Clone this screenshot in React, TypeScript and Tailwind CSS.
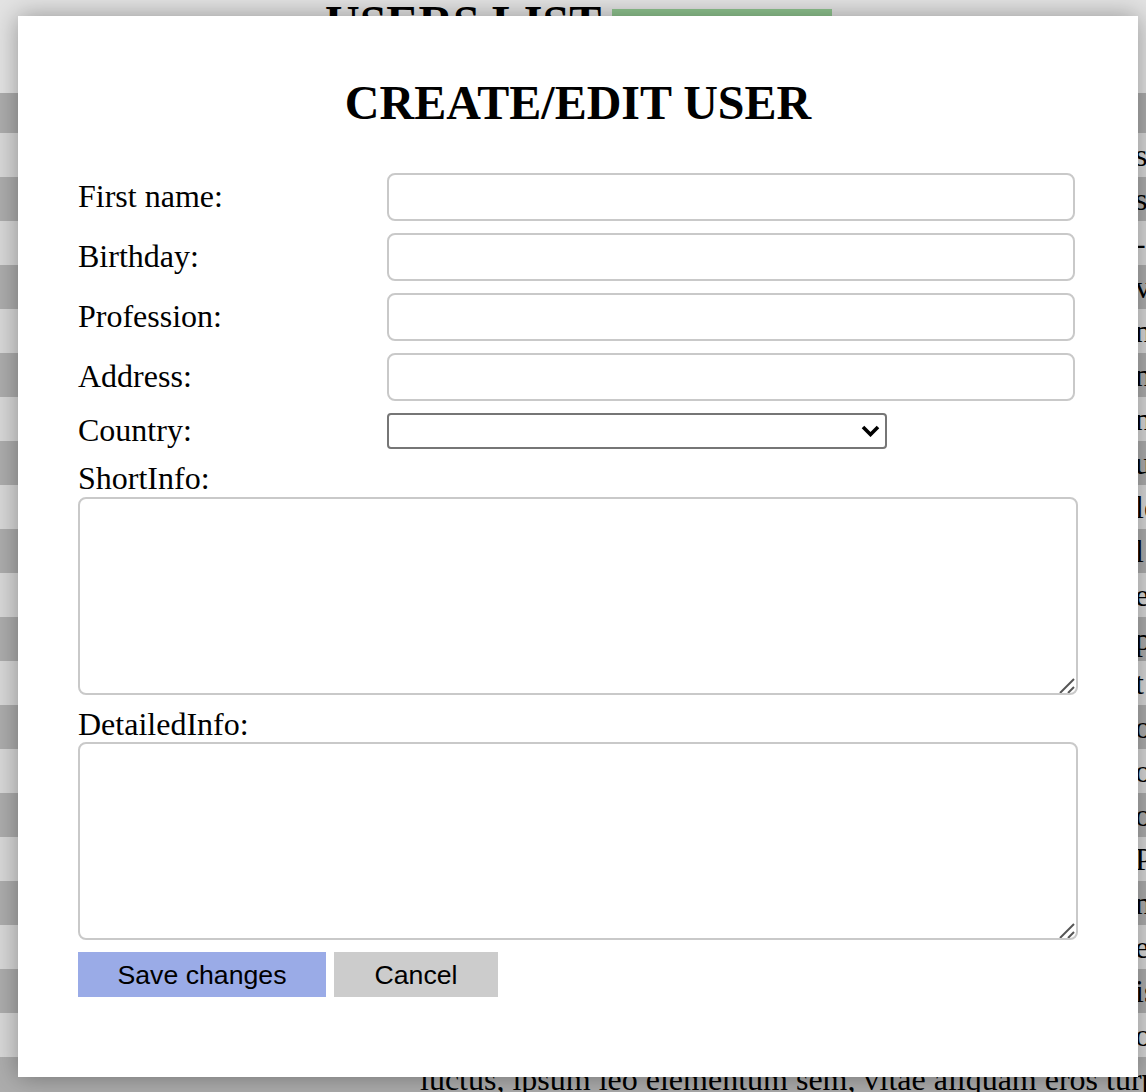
import React from "react";

const rowTexts = ["s", "s", "-", "v", "n", "n", "n", "u", "le", "l", "e", "p", "t", "o", "or", "o", "P", "n", "e", "is", "or"];

function InputRow({ label }: { label: string }) {
  return (
    <div className="flex h-[48px] items-center">
      <label className="w-[309px] shrink-0 pb-[3px] text-[32px]">{label}</label>
      <input className="h-[48px] w-[688px] rounded-[8px] border-2 border-[#c9c9c9] bg-white outline-none" />
    </div>
  );
}

function Grip() {
  return (
    <svg className="pointer-events-none absolute bottom-[2px] right-[3px]" width="18" height="18" viewBox="0 0 18 18">
      <line x1="3" y1="18" x2="17" y2="4" stroke="#555" strokeWidth="2" />
      <line x1="11" y1="18" x2="17" y2="12" stroke="#555" strokeWidth="2" />
    </svg>
  );
}

function Area() {
  return (
    <div className="relative h-[198px] w-[1000px]">
      <textarea className="block h-full w-full resize-none rounded-[8px] border-2 border-[#c9c9c9] bg-white outline-none" />
      <Grip />
    </div>
  );
}

export default function App() {
  return (
    <div className="relative h-[1092px] w-full overflow-hidden bg-[#e3e3e3] font-['Liberation_Serif',serif] text-black">
      <div className="flex h-[93px] items-start">
        <h2 className="ml-[325px] mt-[-4px] whitespace-nowrap text-[48px] font-bold leading-[54px]">USERS LIST</h2>
        <div className="ml-[11px] mt-[9px] h-[45px] w-[220px] bg-[#90c590]" />
      </div>
      <div className="h-[40px] bg-[#adadad]" />
      {rowTexts.map((t, i) => (
        <div key={i} className={`flex h-[44px] items-center text-[32px] ${i % 2 === 0 ? "bg-[#d8d8d8]" : "bg-[#adadad]"}`}>
          <div className="w-[1135px] shrink-0" />
          <span className="whitespace-nowrap">{t}</span>
        </div>
      ))}
      <div className="flex h-[44px] items-center bg-[#adadad] text-[32px]">
        <div className="w-[420px] shrink-0" />
        <span className="whitespace-nowrap">luctus, ipsum leo elementum sem, vitae aliquam eros turpis</span>
      </div>

      <div className="absolute left-[18px] top-[16px] h-[1061px] w-[1120px] bg-white px-[60px] pt-[60px] shadow-[0_0_24px_rgba(0,0,0,0.35)]">
        <h1 className="text-center text-[48px] font-bold leading-[54px]">CREATE/EDIT USER</h1>
        <div className="mt-[43px] flex flex-col gap-[12px]">
          <InputRow label="First name:" />
          <InputRow label="Birthday:" />
          <InputRow label="Profession:" />
          <InputRow label="Address:" />
          <div className="flex h-[36px] items-center">
            <label className="w-[309px] shrink-0 pb-[2px] text-[32px]">Country:</label>
            <div className="relative h-[36px] w-[500px]">
              <select className="h-full w-full appearance-none rounded-[4px] border-2 border-[#767676] bg-white outline-none" />
              <svg className="pointer-events-none absolute right-[7px] top-[12px]" width="19" height="12" viewBox="0 0 19 12">
                <polyline points="2,2 9.5,9.5 17,2" fill="none" stroke="#000" strokeWidth="3.6" />
              </svg>
            </div>
          </div>
        </div>
        <div className="mt-[12px] pb-[2px] text-[32px] leading-[34px]">ShortInfo:</div>
        <Area />
        <div className="mt-[11px] text-[32px] leading-[36px]">DetailedInfo:</div>
        <Area />
        <div className="mt-[12px] flex gap-[8px] font-['Liberation_Sans',sans-serif] text-[26.67px]">
          <button className="h-[45px] w-[248px] bg-[#9aabe7] text-black">Save changes</button>
          <button className="h-[45px] w-[164px] bg-[#cccccc] text-black">Cancel</button>
        </div>
      </div>
    </div>
  );
}
